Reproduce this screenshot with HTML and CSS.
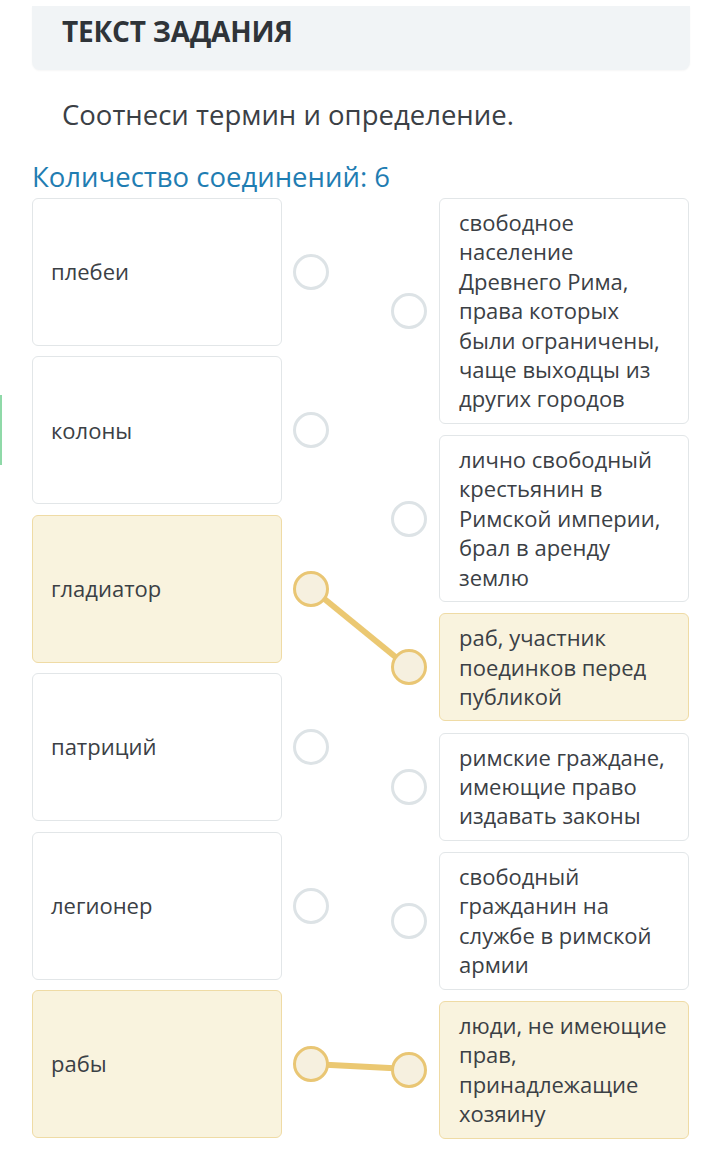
FILE: index.html
```html
<!DOCTYPE html>
<html lang="ru">
<head>
  <meta charset="UTF-8" />
  <meta name="viewport" content="width=device-width, initial-scale=1.0" />
  <title>Текст задания</title>
  <link rel="stylesheet" href="styles.css">
</head>
<body>

  <div class="side-tab"></div>

  <div class="page">
    <div class="task-head">
      <h2>ТЕКСТ ЗАДАНИЯ</h2>
    </div>

    <p class="task-text">Соотнеси термин и определение.</p>

    <div class="counter">Количество соединений: 6</div>

    <div class="board">
      <!-- линии соединений -->
      <svg class="links" width="657" height="940" viewBox="0 0 657 940">
        <line x1="279" y1="390" x2="377" y2="470" />
        <line x1="279" y1="866" x2="377" y2="871" />
      </svg>

      <div class="col col-left">
        <div class="item"><div class="card">плебеи</div><span class="dot"></span></div>
        <div class="item"><div class="card">колоны</div><span class="dot"></span></div>
        <div class="item linked"><div class="card">гладиатор</div><span class="dot"></span></div>
        <div class="item"><div class="card">патриций</div><span class="dot"></span></div>
        <div class="item"><div class="card">легионер</div><span class="dot"></span></div>
        <div class="item linked"><div class="card">рабы</div><span class="dot"></span></div>
      </div>

      <div class="col col-right">
        <div class="item"><span class="dot"></span><div class="card">свободное население Древнего Рима, права которых были ограничены, чаще выходцы из других городов</div></div>
        <div class="item"><span class="dot"></span><div class="card">лично свободный крестьянин в Римской империи, брал в аренду землю</div></div>
        <div class="item linked"><span class="dot"></span><div class="card">раб, участник поединков перед публикой</div></div>
        <div class="item"><span class="dot"></span><div class="card">римские граждане, имеющие право издавать законы</div></div>
        <div class="item"><span class="dot"></span><div class="card">свободный гражданин на службе в римской армии</div></div>
        <div class="item linked"><span class="dot"></span><div class="card">люди, не имеющие прав, принадлежащие хозяину</div></div>
      </div>
    </div>
  </div>

</body>
</html>
```

FILE: styles.css
```css
* {
  box-sizing: border-box;
}

body {
  margin: 0;
  font-family: "Open Sans", Arial, sans-serif;
  background-color: #fff;
  color: #3b4045;
}

/* зелёная полоска слева */
.side-tab {
  position: absolute;
  left: 0;
  top: 395px;
  width: 2px;
  height: 70px;
  background-color: #8fd9a8;
}

.page {
  padding: 6px 30px 0 32px;
}

.task-head {
  background-color: #f1f4f6;
  border-radius: 0 0 8px 8px;
  height: 64px;
  padding: 7px 30px 0;
  box-shadow: 0 1px 2px rgba(0, 0, 0, 0.04);
}

.task-head h2 {
  margin: 0;
  font-size: 28px;
  font-weight: 700;
  letter-spacing: -0.2px;
  color: #2f3439;
  line-height: 36px;
}

.task-text {
  margin: 27px 0 0 30px;
  font-size: 27.5px;
  line-height: 36px;
  color: #3b4045;
}

.counter {
  margin-top: 29px;
  font-size: 27.5px;
  line-height: 30px;
  color: #1f7db2;
}

/* поле соединений */
.board {
  position: relative;
  display: flex;
  justify-content: space-between;
  margin-top: 6px;
  width: 657px;
}

.links {
  position: absolute;
  top: 0;
  left: 0;
  z-index: 0;
}

.links line {
  stroke: #ebc872;
  stroke-width: 6;
}

.col {
  display: flex;
  flex-direction: column;
  position: relative;
  z-index: 1;
}

.col-left {
  gap: 10.4px;
}

.col-right {
  gap: 11.2px;
}

.item {
  display: flex;
  align-items: center;
}

.col-left .item {
  gap: 11px;
}

.col-right .item {
  gap: 12px;
}

.card {
  width: 250px;
  background-color: #fff;
  border: 1px solid #e2e6e8;
  border-radius: 6px;
  font-size: 22px;
  line-height: 29.4px;
  color: #3b4045;
}

.col-left .card {
  height: 148px;
  display: flex;
  align-items: center;
  padding: 0 18px;
}

.col-right .card {
  padding: 9px 16px 9px 19px;
}

.dot {
  width: 36px;
  height: 36px;
  border-radius: 50%;
  border: 3px solid #dde3e6;
  background-color: #fff;
  flex-shrink: 0;
}

.linked .card {
  background-color: #f9f3de;
  border-color: #efdba5;
}

.linked .dot {
  background-color: #f6f0df;
  border-color: #e9c674;
}
```
